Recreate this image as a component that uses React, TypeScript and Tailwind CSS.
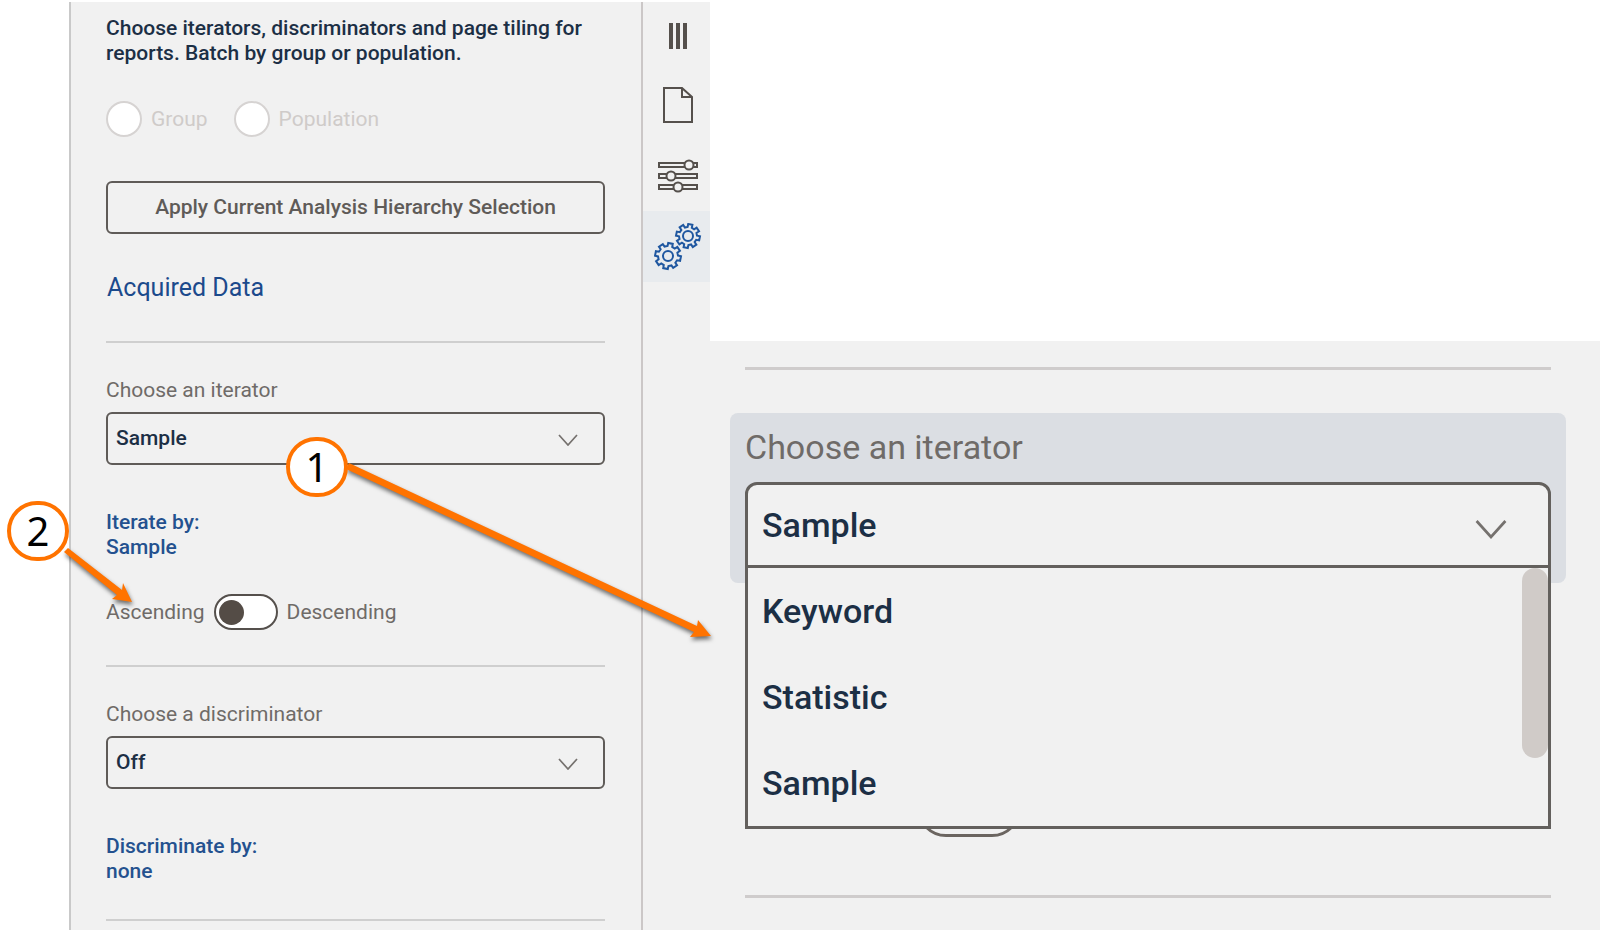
import type { ReactNode } from 'react';

const gearOutline = (cx: number, cy: number, outer: number, inner: number) => {
  const teeth = 8;
  const points: string[] = [];
  for (let i = 0; i < teeth; i++) {
    const mid = ((i + 0.25) * 2 * Math.PI) / teeth;
    const corners: [number, number][] = [
      [inner, -0.24],
      [outer, -0.18],
      [outer, 0.18],
      [inner, 0.24],
    ];
    for (const [r, offset] of corners) {
      const x = cx + r * Math.cos(mid + offset);
      const y = cy + r * Math.sin(mid + offset);
      points.push(`${x.toFixed(2)} ${y.toFixed(2)}`);
    }
  }
  return `M${points.join('L')}Z`;
};

function Chevron({ className }: { className: string }) {
  return (
    <svg viewBox="0 0 20 12" fill="none" stroke="#75716e" strokeWidth="1.7" className={className}>
      <path d="M1 1L10 11L19 1" />
    </svg>
  );
}

function SelectField({ id, label, value }: { id: string; label: string; value: string }) {
  return (
    <div className="flex flex-col gap-[9px]">
      <label htmlFor={id} className="text-[21px] leading-[25px] text-[#6f6b68]">
        {label}
      </label>
      <div className="relative">
        <select
          id={id}
          className="h-[53px] w-full appearance-none rounded-md border-2 border-[#5f5b58] bg-transparent px-2 text-[21px] font-medium text-[#1c2f45]"
        >
          <option>{value}</option>
        </select>
        <Chevron className="pointer-events-none absolute top-[22px] right-[27px] h-3 w-5" />
      </div>
    </div>
  );
}

function RailButton({ label, active, children }: { label: string; active?: boolean; children: ReactNode }) {
  return (
    <button
      aria-label={label}
      className={
        active
          ? 'flex h-[71px] w-full items-center justify-center bg-[#e8ebee] pl-[2px]'
          : 'flex h-[71px] w-full items-center justify-center pl-[2px] first:h-[67px]'
      }
    >
      {children}
    </button>
  );
}

function Rail() {
  return (
    <nav className="w-[69px] shrink-0 border-l-2 border-[#cbc7c7] bg-[#f1f1f1]">
      <RailButton label="Columns">
        <svg viewBox="0 0 20 26" className="h-[26px] w-5" fill="#55504c">
          <path d="M1 0h4v26H1zM8 0h4v26H8zM15 0h4v26h-4z" />
        </svg>
      </RailButton>
      <RailButton label="Page">
        <svg viewBox="0 0 30 36" className="h-9 w-[30px]" fill="none" stroke="#55504c" strokeWidth="2">
          <path d="M1 1h18l10 9v25H1zM19 1v9h10" />
        </svg>
      </RailButton>
      <RailButton label="Settings">
        <svg viewBox="0 0 40 34" className="h-[34px] w-10" fill="#f1f1f1" stroke="#55504c" strokeWidth="2">
          <path d="M1 4h38v4H1zM1 15h38v4H1zM1 26h38v4H1z" />
          <circle cx="31" cy="6" r="4.5" />
          <circle cx="13" cy="17" r="4.5" />
          <circle cx="20" cy="28" r="4.5" />
        </svg>
      </RailButton>
      <RailButton label="Batch" active>
        <svg viewBox="0 0 48 48" className="size-12" fill="none" stroke="#1f57a0" strokeWidth="2">
          <path d={gearOutline(34, 13, 12, 9)} />
          <circle cx="34" cy="13" r="5" />
          <path d={gearOutline(14, 33, 13, 10)} />
          <circle cx="14" cy="33" r="5" />
        </svg>
      </RailButton>
    </nav>
  );
}

function BatchPanel() {
  return (
    <section className="w-[572px] shrink-0 border-l-2 border-[#c9c9c9] bg-[#f1f1f1] pt-[14px] pr-9 pl-[35px] text-[21px] leading-[25px]">
      <p className="font-medium text-[#1c2f45]">
        Choose iterators, discriminators and page tiling for reports. Batch by group or population.
      </p>

      <div className="mt-[35px] flex items-center gap-[26px] text-[#cfcbc9]">
        <label className="flex items-center gap-[9px]">
          <input type="radio" name="batch" disabled className="size-9 appearance-none rounded-full border-2 border-[#d6d3d2] bg-white" />
          Group
        </label>
        <label className="flex items-center gap-[9px]">
          <input type="radio" name="batch" disabled className="size-9 appearance-none rounded-full border-2 border-[#d6d3d2] bg-white" />
          Population
        </label>
      </div>

      <button className="mt-11 h-[53px] w-full rounded-md border-2 border-[#5f5b58] font-medium text-[#5f5b58]">
        Apply Current Analysis Hierarchy Selection
      </button>

      <h2 className="mt-[39px] pl-px text-[25px] leading-[30px] text-[#1c4a8c]">Acquired Data</h2>
      <hr className="mt-[38px] mb-[35px] border-t-2 border-[#cfcfcf]" />

      <SelectField id="iterator" label="Choose an iterator" value="Sample" />
      <p className="mt-[45px] font-medium text-[#24518f]">
        Iterate by:
        <br />
        Sample
      </p>
      <label className="mt-[34px] flex items-center gap-[9px] text-[#6f6b68]">
        Ascending
        <input type="checkbox" role="switch" className="peer sr-only" />
        <span className="flex h-9 w-16 items-center rounded-full border-2 border-[#55504c] bg-white pl-[3px]">
          <span className="size-[25px] rounded-full bg-[#544c46]" />
        </span>
        Descending
      </label>
      <hr className="my-[35px] border-t-2 border-[#cfcfcf]" />

      <SelectField id="discriminator" label="Choose a discriminator" value="Off" />
      <p className="mt-[45px] font-medium text-[#24518f]">
        Discriminate by:
        <br />
        none
      </p>
      <hr className="mt-[35px] border-t-2 border-[#cfcfcf]" />
    </section>
  );
}

const OPTIONS = ['Keyword', 'Statistic', 'Sample'];

/** Enlarged view of the iterator drop-down in its open state. */
function IteratorDetail() {
  return (
    <section className="mt-[339px] flex-1 bg-[#f1f1f1] pt-[26px] pr-[34px] pl-5 text-[34px] leading-10">
      <hr className="mx-[15px] border-t-[3px] border-[#cfcccc]" />
      <div className="relative mt-[43px] rounded-lg bg-[#dbdee3] px-[15px] py-[14px]">
        <label htmlFor="iterator-open" className="block text-[#6f6b68]">
          Choose an iterator
        </label>
        <div className="relative mt-[15px]">
          <select
            id="iterator-open"
            className="h-[87px] w-full appearance-none rounded-t-xl border-[3px] border-[#63605d] bg-[#f1f1f1] px-[14px] pb-[2px] font-medium text-[#1c2f45]"
          >
            <option>Sample</option>
          </select>
          <Chevron className="pointer-events-none absolute top-[37px] right-[44px] h-5 w-8" />
        </div>
        <div className="absolute top-[152px] right-[15px] left-[15px] z-10 flex justify-between border-[3px] border-[#63605d] bg-[#f1f1f1]">
          <ul role="listbox" aria-label="Choose an iterator" className="font-medium text-[#1c2f45]">
            {OPTIONS.map((option) => (
              <li key={option} role="option" aria-selected={option === 'Sample'} className="flex h-[86px] items-center pl-[14px]">
                {option}
              </li>
            ))}
          </ul>
          <div className="h-[190px] w-[26px] rounded-full bg-[#d0cbc8]" />
        </div>
      </div>
      <div className="mt-[196px] ml-[187px] h-[58px] w-[104px] rounded-full border-[3px] border-[#6b6560]" />
      <hr className="mx-[15px] mt-[58px] border-t-[3px] border-[#cfcccc]" />
    </section>
  );
}

function Callouts() {
  return (
    <div className="pointer-events-none absolute top-0 left-0 z-20">
      <svg width="720" height="660" viewBox="0 0 720 660" fill="#ff7300" className="drop-shadow-[1px_3px_2px_rgba(0,0,0,0.55)]">
        <path d="M349 463L697 626L698 620L711 636L690 637L694 632L346 469Z" />
        <path d="M68 548L122 590L123 583L132 602L112 599L117 595L64 552Z" />
      </svg>
      <span className="absolute top-[437px] left-[286px] flex h-[60px] w-[62px] items-center justify-center rounded-full border-4 border-[#ff7300] bg-white font-['Noto_Sans',sans-serif] text-[40px] text-black">
        1
      </span>
      <span className="absolute top-[501px] left-[7px] flex h-[60px] w-[62px] items-center justify-center rounded-full border-4 border-[#ff7300] bg-white font-['Noto_Sans',sans-serif] text-[40px] text-black">
        2
      </span>
    </div>
  );
}

export default function App() {
  return (
    <main className="relative flex min-h-screen bg-white pt-[2px] pb-[2px] pl-[69px] font-[Roboto,sans-serif]">
      <BatchPanel />
      <Rail />
      <IteratorDetail />
      <Callouts />
    </main>
  );
}
